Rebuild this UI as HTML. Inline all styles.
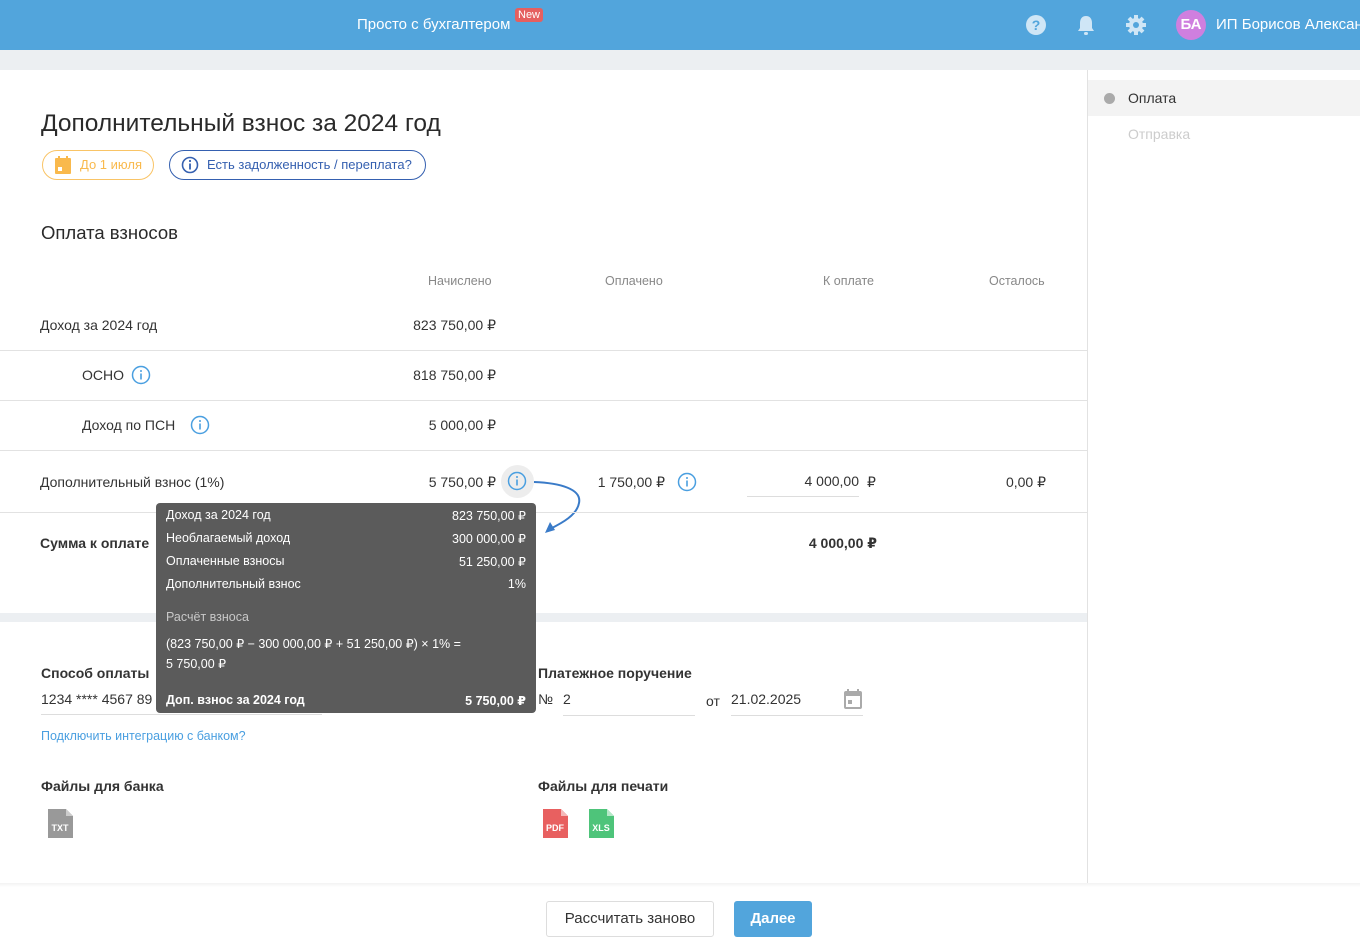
<!DOCTYPE html>
<html><head><meta charset="utf-8"><style>
*{margin:0;padding:0;box-sizing:border-box}
body{width:1360px;height:945px;position:relative;overflow:hidden;background:#fff;font-family:"Liberation Sans","DejaVu Sans",sans-serif;color:#333}
.a{position:absolute;white-space:nowrap}
.hdr{position:absolute;left:0;top:0;width:1360px;height:50px;background:#52a5dc}
.line{position:absolute;left:0;width:1087px;height:1px;background:#e2e2e2}
.r{text-align:right}
.f14{font-size:14px}
.tt{position:absolute;left:156px;top:503px;width:380px;height:210px;background:#5b5b5b;border-radius:4px;color:#fff;font-size:12.5px}
.tt .a{color:#fff}
</style></head><body>
<div class="hdr"></div>
<div class="a" style="left:357px;top:16px;color:#fff;font-size:15px">Просто с бухгалтером</div>
<div class="a" style="left:515px;top:8px;background:#e55f5f;color:#fff;font-size:11px;padding:1px 3px;border-radius:3px">New</div>
<svg class="a" style="left:1025px;top:14px" width="22" height="22"><circle cx="11" cy="11" r="10" fill="#cfe6f6"/><text x="11" y="16" font-size="14" font-weight="bold" fill="#52a5dc" text-anchor="middle" font-family="Liberation Sans">?</text></svg>
<svg class="a" style="left:1076px;top:14px" width="20" height="22"><path d="M10 2c-4 0-6 3-6 7v5l-2 3h16l-2-3V9c0-4-2-7-6-7z" fill="#cfe6f6"/><rect x="8" y="18" width="4" height="3" rx="1.5" fill="#cfe6f6"/></svg>
<svg class="a" style="left:1125px;top:14px" width="22" height="22"><g fill="#cfe6f6"><circle cx="11" cy="11" r="7"/><g stroke="#cfe6f6" stroke-width="4"><path d="M11 1v20M1 11h20M4 4l14 14M18 4L4 18"/></g></g><circle cx="11" cy="11" r="3" fill="#52a5dc"/></svg>
<div class="a" style="left:1176px;top:10px;width:30px;height:30px;border-radius:50%;background:#cf7fdf;color:#fff;font-weight:bold;font-size:15px;text-align:center;line-height:30px">БА</div>
<div class="a" style="left:1216px;top:16px;color:#fff;font-size:15px">ИП Борисов Александр</div>
<div class="a" style="left:0;top:50px;width:1360px;height:20px;background:#eceff2"></div>
<div class="a" style="left:1087px;top:70px;width:1px;height:815px;background:#e2e2e2"></div>
<div class="a" style="left:1088px;top:80px;width:272px;height:36px;background:#f3f3f3"></div>
<div class="a" style="left:1104px;top:93px;width:11px;height:11px;border-radius:50%;background:#aaa"></div>
<div class="a" style="left:1128px;top:90px;font-size:14px;color:#333">Оплата</div>
<div class="a" style="left:1128px;top:126px;font-size:14px;color:#ccc">Отправка</div>

<div class="a" style="left:41px;top:110px;font-size:24.5px;color:#2a2a2a">Дополнительный взнос за 2024 год</div>
<div class="a" style="left:42px;top:150px;width:112px;height:30px;border:1px solid #f9c466;border-radius:15px"></div>
<svg class="a" style="left:53px;top:155px" width="20" height="20"><rect x="2" y="3" width="16" height="16" rx="1" fill="#f9b94c"/><rect x="5" y="1" width="2" height="4" fill="#f9b94c"/><rect x="13" y="1" width="2" height="4" fill="#f9b94c"/><rect x="5" y="12" width="4" height="4" fill="#fff"/></svg>
<div class="a" style="left:80px;top:157px;font-size:13px;color:#f9b94c">До 1 июля</div>
<div class="a" style="left:169px;top:150px;width:257px;height:30px;border:1px solid #3560b0;border-radius:15px"></div>
<svg class="a" style="left:181px;top:156px" width="18" height="18"><circle cx="9" cy="9" r="7.5" fill="none" stroke="#3560b0" stroke-width="1.6"/><rect x="8.1" y="7.5" width="1.8" height="6" fill="#3560b0"/><circle cx="9" cy="5" r="1.1" fill="#3560b0"/></svg>
<div class="a" style="left:207px;top:157px;font-size:13px;color:#3560b0">Есть задолженность / переплата?</div>

<div class="a" style="left:41px;top:222px;font-size:18.5px;color:#2a2a2a">Оплата взносов</div>
<div class="a" style="left:428px;top:274px;font-size:12.5px;color:#888">Начислено</div>
<div class="a" style="left:605px;top:274px;font-size:12.5px;color:#888">Оплачено</div>
<div class="a" style="left:823px;top:274px;font-size:12.5px;color:#888">К оплате</div>
<div class="a" style="left:989px;top:274px;font-size:12.5px;color:#888">Осталось</div>

<div class="a f14" style="left:40px;top:317px">Доход за 2024 год</div>
<div class="a f14 r" style="right:864px;top:317px">823 750,00 ₽</div>
<div class="line" style="top:350px"></div>
<div class="a f14" style="left:82px;top:367px">ОСНО</div>
<svg class="a" style="left:131px;top:365px" width="20" height="20"><circle cx="10" cy="10" r="8.5" fill="none" stroke="#4a9fe0" stroke-width="1.5"/><rect x="9.2" y="8.5" width="1.6" height="6" fill="#4a9fe0"/><circle cx="10" cy="6" r="1" fill="#4a9fe0"/></svg>
<div class="a f14 r" style="right:864px;top:367px">818 750,00 ₽</div>
<div class="line" style="top:400px"></div>
<div class="a f14" style="left:82px;top:417px">Доход по ПСН</div>
<svg class="a" style="left:190px;top:415px" width="20" height="20"><circle cx="10" cy="10" r="8.5" fill="none" stroke="#4a9fe0" stroke-width="1.5"/><rect x="9.2" y="8.5" width="1.6" height="6" fill="#4a9fe0"/><circle cx="10" cy="6" r="1" fill="#4a9fe0"/></svg>
<div class="a f14 r" style="right:864px;top:417px">5 000,00 ₽</div>
<div class="line" style="top:450px"></div>
<div class="a f14" style="left:40px;top:474px">Дополнительный взнос (1%)</div>
<div class="a f14 r" style="right:864px;top:474px">5 750,00 ₽</div>
<div class="a" style="left:501px;top:465px;width:33px;height:33px;border-radius:50%;background:#ededed"></div>
<svg class="a" style="left:507px;top:471px" width="20" height="20"><circle cx="10" cy="10" r="8.5" fill="none" stroke="#4a9fe0" stroke-width="1.5"/><rect x="9.2" y="8.5" width="1.6" height="6" fill="#4a9fe0"/><circle cx="10" cy="6" r="1" fill="#4a9fe0"/></svg>
<svg class="a" style="left:530px;top:475px" width="60" height="62"><path d="M4 7C30 8 52 14 49 28C47 40 32 48 20 54" fill="none" stroke="#3a7bc8" stroke-width="2"/><path d="M15 58l5-11 5 8z" fill="#3a7bc8"/></svg>
<div class="a f14 r" style="right:695px;top:474px">1 750,00 ₽</div>
<svg class="a" style="left:677px;top:472px" width="20" height="20"><circle cx="10" cy="10" r="8.5" fill="none" stroke="#4a9fe0" stroke-width="1.5"/><rect x="9.2" y="8.5" width="1.6" height="6" fill="#4a9fe0"/><circle cx="10" cy="6" r="1" fill="#4a9fe0"/></svg>
<div class="a f14 r" style="right:501px;top:473px">4 000,00</div>
<div class="a f14" style="left:867px;top:474px">₽</div>
<div class="a" style="left:747px;top:496px;width:112px;height:1px;background:#ddd"></div>
<div class="a f14 r" style="right:314px;top:474px">0,00 ₽</div>
<div class="line" style="top:512px"></div>
<div class="a f14" style="left:40px;top:535px;font-weight:bold">Сумма к оплате</div>
<div class="a f14 r" style="right:483px;top:535px;font-weight:bold">4 000,00 ₽</div>
<div class="a" style="left:0;top:613px;width:1087px;height:9px;background:#eceff2"></div>

<div class="a f14" style="left:41px;top:665px;font-weight:bold">Способ оплаты</div>
<div class="a f14" style="left:41px;top:691px">1234 **** 4567 89</div>
<div class="a" style="left:41px;top:714px;width:281px;height:1px;background:#ddd"></div>
<div class="a" style="left:41px;top:729px;font-size:12.5px;color:#4a9fe0">Подключить интеграцию с банком?</div>
<div class="a f14" style="left:538px;top:665px;font-weight:bold">Платежное поручение</div>
<div class="a f14" style="left:538px;top:691px">№</div>
<div class="a f14" style="left:563px;top:691px">2</div>
<div class="a" style="left:563px;top:715px;width:132px;height:1px;background:#ddd"></div>
<div class="a f14" style="left:706px;top:693px">от</div>
<div class="a f14" style="left:731px;top:691px">21.02.2025</div>
<div class="a" style="left:731px;top:715px;width:132px;height:1px;background:#ddd"></div>
<svg class="a" style="left:843px;top:688px" width="20" height="22"><rect x="1" y="3" width="18" height="18" rx="2" fill="#aaa"/><rect x="3" y="8" width="14" height="11" fill="#fff"/><rect x="4" y="1" width="2" height="4" fill="#aaa"/><rect x="14" y="1" width="2" height="4" fill="#aaa"/><rect x="5" y="12" width="4" height="4" fill="#aaa"/></svg>

<div class="a f14" style="left:41px;top:778px;font-weight:bold">Файлы для банка</div>
<div class="a f14" style="left:538px;top:778px;font-weight:bold">Файлы для печати</div>
<svg class="a" style="left:47px;top:808px" width="27" height="31"><path d="M1 1h18l7 7v22H1z" fill="#999"/><path d="M19 1v7h7z" fill="#ccc"/><text x="13" y="23" font-size="9" font-weight="bold" fill="#fff" text-anchor="middle" font-family="Liberation Sans">TXT</text></svg>
<svg class="a" style="left:542px;top:808px" width="27" height="31"><path d="M1 1h18l7 7v22H1z" fill="#e86060"/><path d="M19 1v7h7z" fill="#f5b8b8"/><text x="13" y="23" font-size="9" font-weight="bold" fill="#fff" text-anchor="middle" font-family="Liberation Sans">PDF</text></svg>
<svg class="a" style="left:588px;top:808px" width="27" height="31"><path d="M1 1h18l7 7v22H1z" fill="#4ec47a"/><path d="M19 1v7h7z" fill="#b5e8c8"/><text x="13" y="23" font-size="9" font-weight="bold" fill="#fff" text-anchor="middle" font-family="Liberation Sans">XLS</text></svg>

<div class="tt">
<div class="a" style="left:10px;top:5px">Доход за 2024 год</div><div class="a r" style="right:10px;top:5px">823 750,00 ₽</div>
<div class="a" style="left:10px;top:28px">Необлагаемый доход</div><div class="a r" style="right:10px;top:28px">300 000,00 ₽</div>
<div class="a" style="left:10px;top:51px">Оплаченные взносы</div><div class="a r" style="right:10px;top:51px">51 250,00 ₽</div>
<div class="a" style="left:10px;top:74px">Дополнительный взнос</div><div class="a r" style="right:10px;top:74px">1%</div>
<div class="a" style="left:10px;top:107px;color:#c8c8c8">Расчёт взноса</div>
<div class="a" style="left:10px;top:133px">(823 750,00 ₽ − 300 000,00 ₽ + 51 250,00 ₽) × 1% =</div>
<div class="a" style="left:10px;top:153px">5 750,00 ₽</div>
<div class="a" style="left:10px;top:190px;font-weight:bold">Доп. взнос за 2024 год</div><div class="a r" style="right:10px;top:190px;font-weight:bold">5 750,00 ₽</div>
</div>

<div class="a" style="left:0;top:883px;width:1360px;height:4px;background:linear-gradient(#f3f3f3,#fff)"></div>
<div class="a" style="left:546px;top:901px;width:168px;height:36px;border:1px solid #ddd;border-radius:3px;text-align:center;line-height:34px;font-size:15px;color:#333">Рассчитать заново</div>
<div class="a" style="left:734px;top:901px;width:78px;height:36px;background:#52a5dc;border-radius:3px;text-align:center;line-height:36px;font-size:15px;color:#fff;font-weight:bold">Далее</div>
</body></html>
